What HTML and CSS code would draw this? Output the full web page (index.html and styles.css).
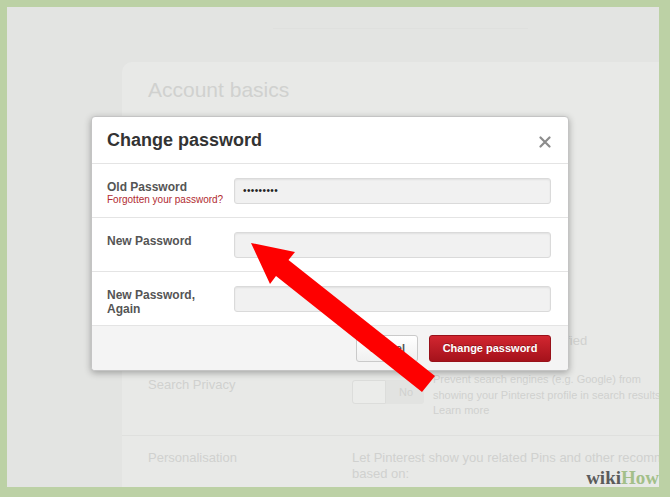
FILE: index.html
```html
<!DOCTYPE html>
<html lang="en">
<head>
    <meta charset="UTF-8">
    <meta name="viewport" content="width=device-width, initial-scale=1.0">
    <title>Change password</title>
    <link rel="stylesheet" href="styles.css">
</head>
<body>
    <div class="frame">
        <div class="screen">
            <div class="topbar"></div>
            <div class="card">
                <h1 class="card-title">Account basics</h1>
                <div class="row note-row">
                    <div class="row-label"></div>
                    <div class="row-body">Your email address has not been verified</div>
                </div>
                <div class="row privacy-row">
                    <div class="row-label">Search Privacy</div>
                    <div class="row-body">
                        <div class="toggle"><span class="toggle-off"></span><span class="toggle-no">No</span></div>
                        <p class="row-desc">Prevent search engines (e.g. Google) from<br>showing your Pinterest profile in search results.<br>Learn more</p>
                    </div>
                </div>
                <div class="row personal-row">
                    <div class="row-label">Personalisation</div>
                    <div class="row-body">Let Pinterest show you related Pins and other recommendations<br>based on:</div>
                </div>
            </div>

            <div class="modal">
                <div class="modal-head">
                    <h2>Change password</h2>
                    <svg class="close" width="12" height="12" viewBox="0 0 12 12">
                        <path d="M1.5 1.5 L10.5 10.5 M10.5 1.5 L1.5 10.5" stroke="#8c8c8c" stroke-width="2.2" stroke-linecap="round"/>
                    </svg>
                </div>
                <div class="field">
                    <div class="field-label">Old Password<a class="forgot">Forgotten your password?</a></div>
                    <div class="input dots">•••••••••</div>
                </div>
                <div class="field">
                    <div class="field-label">New Password</div>
                    <div class="input"></div>
                </div>
                <div class="field">
                    <div class="field-label">New Password,<br>Again</div>
                    <div class="input"></div>
                </div>
                <div class="modal-foot">
                    <button class="btn btn-cancel">Cancel</button>
                    <button class="btn btn-save">Change password</button>
                </div>
            </div>
        </div>

        <svg class="arrow" width="670" height="497" viewBox="0 0 670 497">
            <polygon points="251,243 295,252 288.5,260 435,376 422,392 276,276 270,284" fill="#fe0000"/>
        </svg>

        <div class="wikihow">wiki<span>How</span></div>
    </div>
</body>
</html>
```

FILE: styles.css
```css
body {
    margin: 0;
    font-family: "Liberation Sans", Arial, sans-serif;
}
.frame {
    position: relative;
    width: 670px;
    height: 497px;
    background: #bcd1a5;
    padding: 7px 11px 10px 7px;
    box-sizing: border-box;
}
.screen {
    position: relative;
    width: 652px;
    height: 480px;
    background: #e3e4e2;
    overflow: hidden;
}
.topbar {
    width: 255px;
    height: 1px;
    margin: 21px 0 0 266px;
    background: #dfe0de;
}
.card {
    margin: 33px 0 0 115px;
    height: 430px;
    padding-top: 16px;
    background: #e8e9e7;
    border-radius: 10px 0 0 0;
    color: #d0d1cf;
    font-size: 13px;
}
.card-title {
    margin: 0 0 0 26px;
    font-size: 21px;
    font-weight: normal;
    line-height: 24px;
    color: #d0d1cf;
}
.row {
    display: flex;
    padding-left: 26px;
    white-space: nowrap;
}
.row-label {
    width: 204px;
    flex-shrink: 0;
}
.row-body {
    display: flex;
    align-items: flex-start;
    gap: 9px;
}
.note-row {
    margin-top: 231px;
    line-height: 16px;
}
.privacy-row {
    padding-top: 23px;
    padding-bottom: 16px;
    border-bottom: 1px solid #dfe0de;
}
.privacy-row .row-label {
    padding-top: 6px;
    line-height: 14px;
}
.toggle {
    display: flex;
    width: 72px;
    height: 24px;
    margin-top: 8px;
    flex-shrink: 0;
}
.toggle-off {
    width: 32px;
    border: 1px solid #dcdddb;
    border-radius: 3px 0 0 3px;
    background: #ebecea;
}
.toggle-no {
    flex: 1;
    padding-left: 13px;
    line-height: 24px;
    font-size: 11px;
    background: #e2e3e1;
    border-radius: 0 3px 3px 0;
}
.row-desc {
    margin: 0;
    font-size: 11px;
    line-height: 15.5px;
}
.personal-row {
    padding-top: 14px;
    line-height: 16px;
}

/* dialog */
.modal {
    position: absolute;
    left: 84px;
    top: 109px;
    width: 476px;
    background: #fff;
    border: 1px solid #c4c4c4;
    border-radius: 4px;
    box-shadow: 0 2px 7px rgba(0, 0, 0, 0.3);
    overflow: hidden;
}
.modal-head {
    display: flex;
    justify-content: space-between;
    align-items: center;
    height: 46px;
    padding: 0 17px 0 15px;
    border-bottom: 1px solid #e4e4e4;
}
.modal-head h2 {
    margin: 0;
    font-size: 18px;
    color: #333;
}
.close {
    margin-top: 4px;
}
.field {
    display: flex;
    align-items: flex-start;
    height: 54px;
    padding: 14px 17px 0 15px;
    box-sizing: border-box;
    border-bottom: 1px solid #e4e4e4;
}
.field-label {
    width: 127px;
    flex-shrink: 0;
    margin-top: 2px;
    font-size: 12px;
    font-weight: bold;
    line-height: 14px;
    color: #555;
}
.forgot {
    display: block;
    font-size: 10px;
    font-weight: normal;
    line-height: 12px;
    color: #b12a30;
}
.input {
    flex: 1;
    height: 26px;
    box-sizing: border-box;
    padding-left: 8px;
    background: #f1f1f1;
    border: 1px solid #dadada;
    border-radius: 3px;
    box-shadow: inset 0 1px 2px rgba(0, 0, 0, 0.07);
}
.dots {
    font-size: 10px;
    line-height: 24px;
    letter-spacing: 0.4px;
    color: #222;
}
.modal-foot {
    display: flex;
    justify-content: flex-end;
    align-items: center;
    gap: 11px;
    height: 44px;
    padding-right: 17px;
    background: #f4f4f4;
}
.btn {
    height: 27px;
    border-radius: 3px;
    font-family: "Liberation Sans", Arial, sans-serif;
    font-size: 11px;
    font-weight: bold;
    cursor: pointer;
}
.btn-cancel {
    width: 62px;
    background: linear-gradient(#ffffff, #f0f0f0);
    border: 1px solid #cacaca;
    color: #555;
}
.btn-save {
    width: 122px;
    background: linear-gradient(#d22630, #a5121b);
    border: 1px solid #98111a;
    color: #fff;
    text-shadow: 0 -1px 0 rgba(0, 0, 0, 0.3);
}

/* overlays */
.arrow {
    position: absolute;
    left: 0;
    top: 0;
}
.wikihow {
    position: absolute;
    right: 11px;
    bottom: 10px;
    font-family: "Liberation Serif", "Times New Roman", serif;
    font-size: 19px;
    font-weight: bold;
    line-height: 19px;
    color: #5b5b5b;
}
.wikihow span {
    color: #a3bf89;
}
```
